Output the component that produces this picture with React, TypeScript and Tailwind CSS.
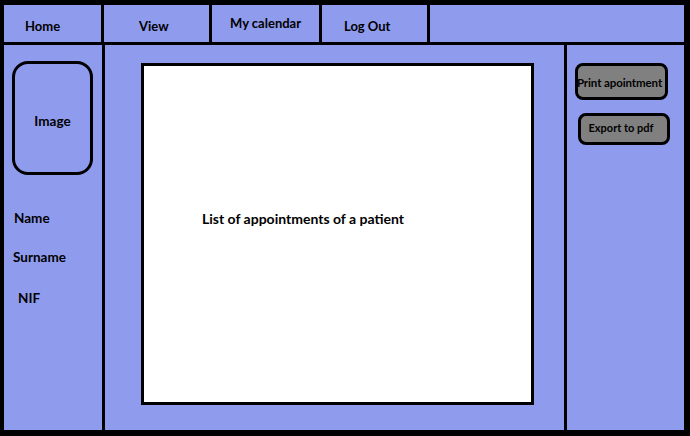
import React from "react";

const font = { fontFamily: "Lato, 'Open Sans', sans-serif" };

export default function App() {
  return (
    <div
      className="w-[690px] h-[436px] bg-black pt-[5px] pl-[4px] pr-[6px] pb-[6px] flex flex-col gap-[3px] font-bold text-black text-[13px] leading-[16px]"
      style={font}
    >
      {/* top nav */}
      <div className="flex gap-[3px] h-[37px]">
        <div className="w-[97px] bg-[#8f9bed] pl-[21px] pt-[13px]">Home</div>
        <div className="w-[105px] bg-[#8f9bed] pl-[35px] pt-[13px]">View</div>
        <div className="w-[107px] bg-[#8f9bed] pl-[18px] pt-[10px]">My calendar</div>
        <div className="w-[105px] bg-[#8f9bed] pl-[22px] pt-[13px]">Log Out</div>
        <div className="flex-1 bg-[#8f9bed]" />
      </div>

      {/* content */}
      <div className="flex-1 flex gap-[3px]">
        {/* left sidebar */}
        <div className="w-[98px] bg-[#8f9bed] flex flex-col pt-[16px] text-[13.5px]">
          <div className="ml-[8px] w-[81px] h-[114px] border-[3px] border-black rounded-[16px] flex items-center justify-center pt-[5px]">
            Image
          </div>
          <div className="ml-[10px] mt-[35px]">Name</div>
          <div className="ml-[9px] mt-[23px]">Surname</div>
          <div className="ml-[14px] mt-[25px]">NIF</div>
        </div>

        {/* main panel */}
        <div className="w-[459px] bg-[#8f9bed] pl-[36px] pt-[18px]">
          <div className="w-[393px] h-[342px] border-[3px] border-black bg-white pl-[58px] pt-[145px] text-[14px]">
            List of appointments of a patient
          </div>
        </div>

        {/* right sidebar */}
        <div className="flex-1 bg-[#8f9bed] flex flex-col pt-[18px]">
          <div className="ml-[8px] w-[93px] h-[37px] bg-[#808080] border-[3px] border-black rounded-[8px] flex items-center justify-center whitespace-nowrap text-[11.5px] tracking-[-0.1px] pt-[3px] pr-[4px]">
            Print apointment
          </div>
          <div className="ml-[11px] mt-[13px] w-[92px] h-[32px] bg-[#808080] border-[3px] border-black rounded-[8px] flex items-center justify-center whitespace-nowrap text-[11px] pr-[6px] pb-[2px]">
            Export to pdf
          </div>
        </div>
      </div>
    </div>
  );
}
